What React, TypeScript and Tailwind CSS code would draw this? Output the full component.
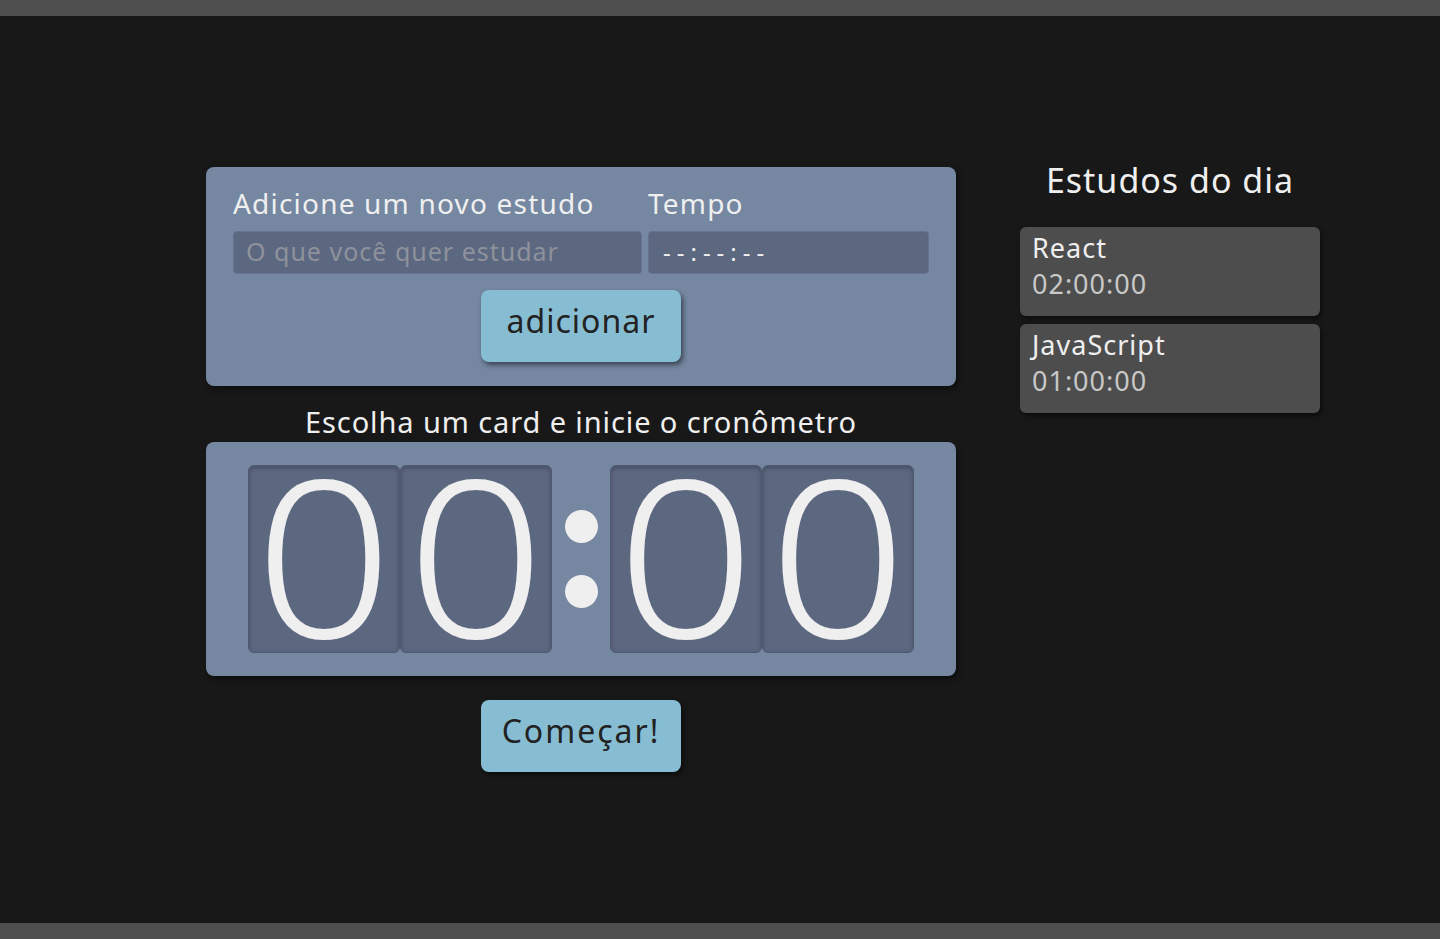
import { useState } from "react";

type Study = { name: string; time: string };

const studies: Study[] = [
  { name: "React", time: "02:00:00" },
  { name: "JavaScript", time: "01:00:00" },
];

function Digit({ value }: { value: string }) {
  return (
    <div className="flex h-[188px] w-[152px] items-center justify-center rounded-md border border-[#4f5a70] bg-[#5c6780] pb-[12px] shadow-[inset_0_2px_4px_rgba(0,0,0,0.25)]">
      <span className="scale-x-110 text-[220px] font-light leading-[150px] text-[#efefef]">{value}</span>
    </div>
  );
}

export default function App() {
  const [subject, setSubject] = useState("");
  const [time, setTime] = useState("");

  return (
    <div
      className="flex min-h-[939px] flex-col bg-[#181818] text-[#efefef]"
      style={{ fontFamily: '"Noto Sans", sans-serif' }}
    >
      <div className="h-4 bg-[#4f4f4f]" />
      <main className="flex flex-1 gap-16 pl-[206px] pt-[151px]">
        <section className="flex w-[750px] flex-col items-center">
          <form
            onSubmit={(e) => e.preventDefault()}
            className="flex w-full flex-col items-center rounded-lg bg-[#7587a1] px-[27px] pb-6 pt-4 shadow-[2px_3px_6px_rgba(0,0,0,0.5)]"
          >
            <div className="flex w-full gap-[6px]">
              <label className="flex w-[409px] flex-col gap-2">
                <span className="text-[28px] leading-[40px] tracking-[1.2px]">Adicione um novo estudo</span>
                <input
                  value={subject}
                  onChange={(e) => setSubject(e.target.value)}
                  placeholder="O que você quer estudar"
                  className="h-[43px] w-full rounded border border-[#667290] bg-[#5c6780] px-3 pb-[3px] text-[25px] tracking-[1px] text-[#efefef] outline-none placeholder:text-[#8e929c]"
                />
              </label>
              <label className="flex w-[281px] flex-col gap-2">
                <span className="text-[28px] leading-[40px] tracking-[1.2px]">Tempo</span>
                <input
                  value={time}
                  onChange={(e) => setTime(e.target.value)}
                  placeholder="--:--:--"
                  className="h-[43px] w-full rounded border border-[#667290] bg-[#5c6780] px-[14px] pb-[3px] text-[24px] tracking-[6px] text-[#efefef] outline-none placeholder:text-[#efefef]"
                />
              </label>
            </div>
            <button
              type="submit"
              className="mt-4 h-[72px] w-[200px] rounded-lg bg-[#87bdd3] pb-[10px] text-[32px] tracking-[1px] text-[#222] shadow-[2px_3px_5px_rgba(0,0,0,0.5)]"
            >
              adicionar
            </button>
          </form>
          <p className="mt-4 text-[29px] leading-[40px] tracking-[0.9px]">Escolha um card e inicie o cronômetro</p>
          <div className="flex h-[234px] w-full items-center justify-center rounded-lg bg-[#7587a1] shadow-[2px_3px_6px_rgba(0,0,0,0.5)]">
            <div className="flex">
              <Digit value="0" />
              <Digit value="0" />
            </div>
            <div className="flex w-[58px] flex-col items-center gap-[32px]">
              <div className="h-[33px] w-[33px] rounded-full bg-[#efefef]" />
              <div className="h-[33px] w-[33px] rounded-full bg-[#efefef]" />
            </div>
            <div className="flex">
              <Digit value="0" />
              <Digit value="0" />
            </div>
          </div>
          <button
            type="button"
            className="mt-6 h-[72px] w-[200px] rounded-lg bg-[#87bdd3] pb-[10px] text-[32px] tracking-[2px] text-[#222] shadow-[2px_3px_5px_rgba(0,0,0,0.5)]"
          >
            Começar!
          </button>
        </section>
        <aside className="-mt-[9px] flex w-[300px] flex-col">
          <h2 className="text-center text-[34px] leading-[44px] tracking-[1px]">Estudos do dia</h2>
          <ul className="mt-[25px] flex flex-col gap-2">
            {studies.map((s) => (
              <li
                key={s.name}
                className="flex h-[89px] flex-col rounded-md bg-[#4d4d4d] px-3 pt-[3px] shadow-[2px_3px_5px_rgba(0,0,0,0.5)]"
              >
                <h3 className="text-[27px] leading-[36px] tracking-[1px]">{s.name}</h3>
                <span className="text-[27px] leading-[36px] tracking-[1px] text-[#c8c8c8]">{s.time}</span>
              </li>
            ))}
          </ul>
        </aside>
      </main>
      <div className="h-4 bg-[#4f4f4f]" />
    </div>
  );
}
